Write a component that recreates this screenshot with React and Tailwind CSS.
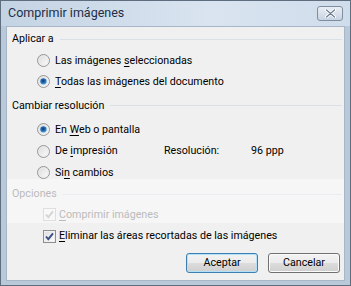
import React from "react";

const font = { fontFamily: 'Roboto, "Liberation Sans", Arial, sans-serif' };

function Radio({ checked }) {
  return (
    <svg width="13" height="13" viewBox="0 0 13 13" className="shrink-0">
      <defs>
        <linearGradient id="rg" x1="0" y1="0" x2="1" y2="1">
          <stop offset="0" stopColor="#d9d9d9" />
          <stop offset="1" stopColor="#ffffff" />
        </linearGradient>
        <radialGradient id="rd" cx="0.45" cy="0.4" r="0.6">
          <stop offset="0" stopColor="#0d3c78" />
          <stop offset="0.6" stopColor="#2b6fb5" />
          <stop offset="1" stopColor="#7fc0ef" />
        </radialGradient>
      </defs>
      <circle cx="6.5" cy="6.5" r="6" fill="url(#rg)" stroke="#959595" strokeWidth="1" />
      <circle cx="6.5" cy="6.5" r="4.6" fill="none" stroke="#e8e8e8" strokeWidth="0.8" />
      {checked && <circle cx="6.5" cy="6.5" r="3.3" fill="url(#rd)" />}
    </svg>
  );
}

function Check({ disabled }) {
  return (
    <svg width="13" height="13" viewBox="0 0 13 13" className="shrink-0">
      <defs>
        <linearGradient id="cg" x1="0" y1="0" x2="1" y2="1">
          <stop offset="0" stopColor="#dcdcdc" />
          <stop offset="1" stopColor="#ffffff" />
        </linearGradient>
      </defs>
      <rect x="0.5" y="0.5" width="12" height="12" fill={disabled ? "#f4f4f4" : "url(#cg)"} stroke={disabled ? "#c9c9c9" : "#8e8f8f"} />
      <rect x="1.5" y="1.5" width="10" height="10" fill="none" stroke={disabled ? "#f4f4f4" : "#f0f0f0"} />
      <path d="M3 6.5 L5.3 9.2 L10 3.3" fill="none" stroke={disabled ? "#b8b8b8" : "#3b4f86"} strokeWidth="1.9" />
    </svg>
  );
}

function Heading({ children, disabled, h }) {
  return (
    <div className={`flex items-center gap-[6px] pl-[5px] pr-[2px] ${h}`}>
      <span className={disabled ? "text-[#8d8d8d]" : "text-black"}>{children}</span>
      <div className="h-px flex-1 bg-[#d8e1e8]" />
    </div>
  );
}

function U({ children }) {
  return <span className="underline underline-offset-[2px] decoration-1">{children}</span>;
}

function RadioRow({ checked, children, h, extra }) {
  return (
    <div className={`flex items-center pl-[30px] ${h}`}>
      <Radio checked={checked} />
      <span className="ml-[5px] w-[102px] whitespace-nowrap">{children}</span>
      {extra}
    </div>
  );
}

function Btn({ children, def }) {
  return (
    <div
      className={`flex h-[20px] w-[72px] items-center justify-center rounded-[3px] border ${
        def ? "border-[#3c7fb1] shadow-[inset_0_0_0_1px_#b4e1f7]" : "border-[#707070] shadow-[inset_0_0_0_1px_#fbfbfb]"
      } bg-[linear-gradient(#f3f3f3_0%,#ebebeb_50%,#dddddd_51%,#cfcfcf_100%)] text-black`}
    >
      {children}
    </div>
  );
}

export default function App() {
  return (
    <div style={font} className="relative flex h-[286px] w-[351px] flex-col overflow-hidden bg-[#b9c9da] text-[10.7px] leading-[14px]">
      <div className="absolute inset-0 border border-[#5f6e7e]" />
      {/* title bar */}
      <div className="flex h-[26px] shrink-0 items-center justify-between bg-[linear-gradient(to_right,#c4d3e3,#d9e4f0_60%,#cfdcea)] pl-[8px] pr-[8px]">
        <span className="text-[12.5px] text-[#1c2f48]">Comprimir imágenes</span>
        <div className="flex h-[15px] w-[26px] items-center justify-center rounded-[3px] border border-[#7d8ea2] bg-[linear-gradient(#e9eef4,#c9d4e1)]">
          <svg width="11" height="9" viewBox="0 0 11 9">
            <path d="M1.5 1 L9.5 8 M9.5 1 L1.5 8" stroke="#ffffff" strokeWidth="3" strokeLinecap="round" />
            <path d="M1.5 1 L9.5 8 M9.5 1 L1.5 8" stroke="#6a7c92" strokeWidth="1.2" strokeLinecap="round" />
          </svg>
        </div>
      </div>
      {/* content */}
      <div className="relative mx-[6px] mb-[5px] flex flex-1 flex-col border border-[#a7b7c9] bg-[#f0f0f0] pt-px">
        <Heading h="h-[22px]">Aplicar a</Heading>
        <RadioRow h="h-[21px]">
          Las imágenes <U>s</U>eleccionadas
        </RadioRow>
        <RadioRow checked h="h-[21px]">
          <U>T</U>odas las imágenes del documento
        </RadioRow>
        <Heading h="h-[27px]">Cambiar resolución</Heading>
        <RadioRow checked h="h-[21px]">
          En <U>W</U>eb o pantalla
        </RadioRow>
        <RadioRow
          h="h-[22px]"
          extra={
            <div className="flex">
              <span className="ml-[7px] w-[87px]">Resolución:</span>
              <span>96 ppp</span>
            </div>
          }
        >
          De <U>i</U>mpresión
        </RadioRow>
        <RadioRow h="h-[21px]">
          Si<U>n</U> cambios
        </RadioRow>
        <Heading disabled h="h-[22px]">Opciones</Heading>
        <div className="flex h-[19px] items-center pl-[36px] text-[#8d8d8d]">
          <Check disabled />
          <span className="ml-[3px]">
            <U>C</U>omprimir imágenes
          </span>
        </div>
        <div className="flex h-[24px] items-center pl-[36px]">
          <Check />
          <span className="ml-[3px]">
            <U>E</U>liminar las áreas recortadas de las imágenes
          </span>
        </div>
        <div className="mt-[5px] flex justify-end gap-[10px] pr-[4px]">
          <Btn def>Aceptar</Btn>
          <Btn>Cancelar</Btn>
        </div>
        {/* watermark band */}
        <div className="pointer-events-none absolute left-0 right-0 top-[152px] h-[44px] bg-white/40" />
      </div>
    </div>
  );
}
